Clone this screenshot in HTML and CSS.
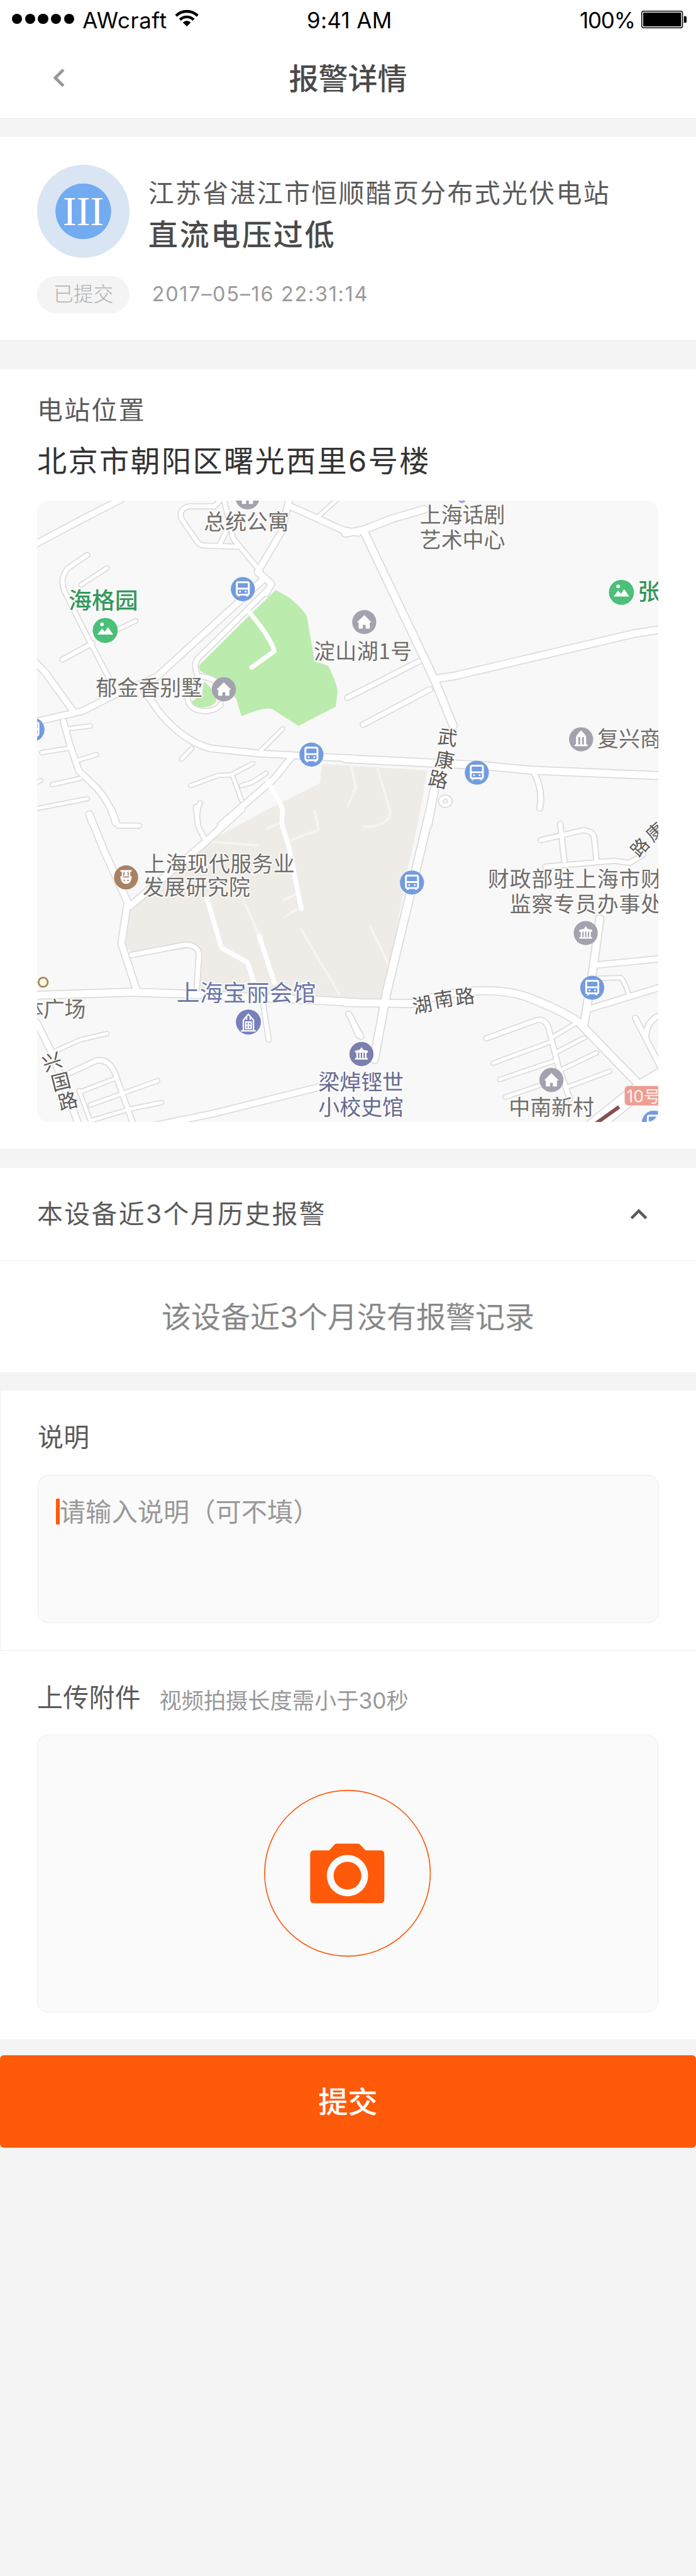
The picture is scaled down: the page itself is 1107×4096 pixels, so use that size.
FILE: index.html
```html
<!DOCTYPE html>
<html lang="zh-CN">
<head>
<meta charset="utf-8">
<title>报警详情</title>
<link rel="stylesheet" href="styles.css">
</head>
<body>
<header class="header">
  <div class="status">
    <div class="status-left">
      <span class="dots"><i></i><i></i><i></i><i></i><i></i></span>
      <span class="carrier">AWcraft</span>
      <svg class="wifi" viewBox="0 0 52 38">
        <g fill="none" stroke="#000" stroke-width="6"><path d="M2.7 13.7A33 33 0 0 1 49.3 13.7"/><path d="M11.2 22.2A21 21 0 0 1 40.8 22.2"/></g>
        <path d="M26 36.5L17.5 28A12 12 0 0 1 34.5 28Z"/>
      </svg>
    </div>
    <span class="time">9:41 AM</span>
    <div class="status-right">
      <span class="percent">100%</span>
      <svg class="battery" viewBox="0 0 98 38">
        <rect x="1" y="1" width="88" height="36" rx="4" fill="none" stroke="#000" stroke-width="2"/>
        <rect x="4" y="4" width="82" height="30" rx="1"/>
        <path d="M92 12h3q3 0 3 3v8q0 3-3 3h-3z"/>
      </svg>
    </div>
  </div>
  <nav class="nav">
    <svg class="back" viewBox="0 0 24 40"><path d="M21.5 2.500L4 20L21.500 37.500"/></svg>
    <h1>报警详情</h1>
  </nav>
</header>

<section class="panel alarm">
  <div class="alarm-main">
    <div class="level"><span>III</span></div>
    <div class="alarm-text">
      <p class="station">江苏省湛江市恒顺醋页分布式光伏电站</p>
      <p class="alarm-name">直流电压过低</p>
    </div>
  </div>
  <div class="alarm-meta">
    <span class="tag">已提交</span>
    <time class="date">2017–05–16 22:31:14</time>
  </div>
</section>

<section class="panel place">
  <h2 class="label">电站位置</h2>
  <p class="address">北京市朝阳区曙光西里6号楼</p>
  <svg class="map" viewBox="80 1080 1340 1340">
    <defs>
      <g id="roads">
        <g transform="translate(70 1070) scale(.4464)">
          <path class="w28" d="M0 240L230 118L430 15"/>
          <path class="w22" d="M915 10L880 50H760Q705 60 720 110L795 220Q805 240 840 240L1000 245M905 235L935 175M925 15L970 205L1090 350"/>
          <path class="w28" d="M1245 0L1205 170L1090 365L1155 425L1130 470"/>
          <path class="w28" d="M1235 45L1380 110L1500 165L1575 178"/>
          <path class="w18" d="M1370 110L1480 10"/>
          <path class="w28" d="M1090 370L1120 400L600 875L400 960L240 1040L10 1092"/>
          <path class="w24" d="M1140 450L800 785Q775 820 800 870Q900 880 900 930"/>
          <path class="w28" d="M540 940L610 1040Q720 1180 860 1220L1100 1245L1575 1270"/>
          <path class="w22" d="M265 285L170 350Q130 400 155 460L270 690L370 880M290 712L145 790"/>
          <path class="w18" d="M360 348L235 430M360 670L500 603"/>
          <path class="w28" d="M0 790L60 850L200 1045"/>
          <path class="w26" d="M150 1090L180 1200L225 1330L310 1410Q380 1490 400 1580"/>
          <path class="w18" d="M170 1125L280 1112M45 1240L170 1220M210 1280L310 1250M95 1395L230 1365M0 1515L265 1463M15 1385L40 1375M270 1540L280 1580"/>
          <path class="w22" d="M800 870Q750 930 750 980Q760 1040 840 1040Q905 1030 910 1005"/>
          <path class="w18" d="M1210 1125L1100 1235M770 1220L720 1272M765 1400L900 1350L960 1348L1065 1293M970 1360L1010 1470M1010 1400L1060 1385L1130 1340"/>
          <path class="w28" d="M1250 1265L1165 1370L910 1590"/>
          <path class="w22" d="M810 1485Q790 1520 800 1590"/>
        </g>
        <g transform="translate(750 1070) scale(.4796 .4464)">
          <path class="w32" d="M-10 180L70 165L200 110L345 65M75 175L390 885L475 1110M390 885L480 870L1290 665L1410 645"/>
          <path class="w24" d="M320 800L0 975M370 935L70 1105"/>
          <path class="w34" d="M-10 1270L600 1302L820 1325L1410 1352"/>
          <path class="w24" d="M840 1340Q880 1420 865 1510"/>
          <path class="w34" d="M390 1420L360 1590"/>
          <path class="w18" d="M420 1475a20 20 0 1 0 40 0a20 20 0 1 0 -40 0"/>
        </g>
        <g transform="translate(70 1750) scale(.4464)">
          <path class="w30" d="M275 15L350 200L460 440L430 640L505 870M470 460L830 155L1010 -10"/>
          <path class="w22" d="M790 -20L800 70L835 140M385 -10L415 70H515"/>
          <path class="w24" d="M480 695L740 645Q800 650 805 690L795 850"/>
          <path class="w34" d="M10 890L480 875L700 882L1400 915L1580 925"/>
          <path class="w28" d="M20 1020L90 1160L225 1520"/>
          <path class="w18" d="M110 1160L230 1105L360 1075"/>
          <path class="w24" d="M180 1265L310 1205Q370 1195 400 1270L490 1520"/>
          <path class="w18" d="M225 1350L285 1510M235 1355L400 1292M280 1420L605 1303M295 1492L470 1440L625 1408"/>
          <path class="w22" d="M1115 930L1142 1105M1535 990L1575 1085"/>
          <path class="w28" d="M540 1530L880 1460L1380 1335"/>
        </g>
        <g transform="translate(750 1750) scale(.4796 .4464)">
          <path class="w34" d="M375 -20L300 320L175 880L120 1200"/>
          <path class="w34" d="M-10 925L290 930Q420 880 560 870Q700 860 800 895Q960 960 1040 1020L1310 1320"/>
          <path class="w32" d="M1135 520L1105 760L1065 1025"/>
          <path class="w26" d="M1105 745L1410 713M1090 955L1410 850"/>
          <path class="w18" d="M1120 808L1230 805Q1245 820 1265 885"/>
          <path class="w22" d="M870 140L1060 92Q1105 95 1110 130L1120 240M957 60L975 240M890 268L1200 240L1270 250L1330 210"/>
          <path class="w22" d="M625 1098L850 1010Q890 1000 905 1050L950 1240L1000 1390"/>
          <path class="w18" d="M925 1090L1020 1030M655 1218L915 1115M685 1297L935 1205M710 1382L880 1320M940 1165L1065 1095M960 1250L1120 1168M985 1335L1180 1257"/>
          <path class="w24" d="M1295 1000L1405 1230M1410 985Q1345 1010 1342 1090M5 980L60 1090"/>
          <path class="w60" d="M1440 1260L1330 1330L1110 1520"/>
        </g>
      </g>
      <g id="bus">
        <circle r="26" fill="#739be0"/>
        <g fill="none" stroke="#fff" stroke-width="4"><rect x="-13" y="-15" width="26" height="27" rx="3"/><path d="M-13 -1H13M-9 12V16M9 12V16"/></g>
        <circle cx="-6" cy="5.500" r="2" fill="#fff"/><circle cx="6" cy="5.500" r="2" fill="#fff"/>
      </g>
      <g id="house"><circle r="26" fill="#a3a2ae"/><path fill="#fff" d="M0-15L16 1H12V14H3V6H-3V14H-12V1H-16Z"/></g>
      <g id="park"><circle r="27" fill="#4cbf79"/><path fill="#fff" d="M-17 9L-7-4L-1 3L6-7L17 9Z"/><circle cx="-7" cy="-13" r="4" fill="#fff"/></g>
      <g id="hall"><circle r="26"/><path fill="#fff" d="M-14-7L-4-9L0-15L4-9L14-7V-3H11V9H14V12H-14V9H-11V-3H-14Z"/><path d="M-6-3V9M0-3V9M6-3V9" stroke="currentColor" stroke-width="3"/></g>
    </defs>
    <rect x="80" y="1080" width="1340" height="1340" fill="#f8f8f8"/>
    <path fill="#efece8" d="M590 1740L690 1690L695 1648L922 1662L905 1760L875 1900L828 2156L430 2140L425 2045L290 2060L262 2032L285 1955L440 1820Z"/>
    <g class="faint">
      <path d="M448 1815L556 1824M650 2005L732 2145M679 1750L688 1790L628 1812M525 1942L560 2020M758 1650L768 1700L750 1740M815 1660L842 1750Q840 1785 785 1783M800 2000L840 2085M575 1788L610 1772M612 1942L640 1928M615 1978L640 1962"/>
    </g>
    <path fill="#bbebad" d="M595 1273L624 1289Q655 1316 662 1329L679 1427L708 1436Q731 1481 728 1499L724 1525L644 1566L588 1530Q575 1523 521 1545L510 1508L480 1470L432 1448L429 1436L548 1318Z"/>
    <path fill="#bbebad" d="M440 1470Q465 1490 467 1512Q454 1530 427 1525L411 1516L436 1498Z"/>
    <use href="#roads" class="casing"/>
    <use href="#roads" class="surface"/>
    <g class="plain-road">
      <path d="M539 1322Q583 1374 592 1405L543 1440"/>
      <path d="M578 1685L610 1745L608 1777L624 1830L650 1960M447 1940L478 2045L534 2076L548 2120M559 2018L592 2120"/>
    </g>
    <path d="M1336 2388L1280 2428" stroke="#87504c" stroke-width="8"/>
    <rect x="1348" y="2343" width="90" height="42" rx="8" fill="#ee9d91"/>
    <text x="1352" y="2378" font-size="36" fill="#fff3ee">10号</text>

    <use href="#house" x="534" y="1073"/>
    <circle cx="997" cy="1076" r="9" fill="#a79bf0"/>
    <use href="#park" x="227" y="1360"/>
    <use href="#park" x="1341" y="1278"/>
    <use href="#bus" x="524" y="1271"/>
    <use href="#bus" x="70" y="1574"/>
    <use href="#bus" x="672" y="1628"/>
    <use href="#bus" x="1029" y="1667"/>
    <use href="#bus" x="889" y="1904"/>
    <use href="#bus" x="1278" y="2131"/>
    <use href="#bus" x="1411" y="2422"/>
    <use href="#house" x="483" y="1487"/>
    <use href="#house" x="786" y="1342"/>
    <use href="#house" x="1190" y="2330"/>
    <g transform="translate(1254 1595)"><circle r="26" fill="#a3a2ae"/><path fill="#fff" d="M-14 15V11H-11V-5Q-9-11 0-19Q9-11 11-5V11H14V15Z"/><path d="M-4-5V11M4-5V11" stroke="#a3a2ae" stroke-width="4"/></g>
    <use href="#hall" x="1264" y="2013" class="hall-gray"/>
    <use href="#hall" x="780" y="2274" class="hall-blue"/>
    <g transform="translate(272 1893)"><circle r="26" fill="#a98163"/><path fill="#fff" d="M-12-16H12V-12H9V-3H12V1Q10 14 0 14Q-10 14-12 1V-3H-9V-12H-12Z"/><path d="M-4-12L-5-4M4-12L5-4M-7-1H7M-4 5V8M4 5V8" stroke="#a98163" stroke-width="2.500"/></g>
    <g transform="translate(536 2205)"><circle r="27" fill="#7680bd"/><path d="M-16 19H16M-11 19V-4L0-17L11-4V19M-6 0H6V14H-6ZM0 0V14M-6 7H6M-4-12V-5M4-12V-5" fill="none" stroke="#fff" stroke-width="3"/></g>
    <circle cx="93" cy="2119" r="10" fill="#fff8e6" stroke="#a98a5c" stroke-width="4"/>

    <g class="map-label">
      <text x="440" y="1142" textLength="184">总统公寓</text>
      <text x="906" y="1128" textLength="184">上海话剧</text>
      <text x="906" y="1182" textLength="184">艺术中心</text>
      <text class="green" x="148" y="1314" textLength="150">海格园</text>
      <text class="green" x="1376" y="1295">张</text>
      <text x="207" y="1500" textLength="230">郁金香别墅</text>
      <text x="677" y="1422" textLength="212">淀山湖1号</text>
      <text x="1289" y="1610">复兴商</text>
      <text x="311" y="1881" textLength="325">上海现代服务业</text>
      <text x="308" y="1931" textLength="232">发展研究院</text>
      <text x="1053" y="1913" textLength="376">财政部驻上海市财</text>
      <text x="1100" y="1967" textLength="329">监察专员办事处</text>
      <text class="blue big" x="381" y="2160" textLength="301">上海宝丽会馆</text>
      <text x="48" y="2194" textLength="137">体广场</text>
      <text class="blue" x="687" y="2351" textLength="184">梁焯铿世</text>
      <text class="blue" x="687" y="2406" textLength="184">小校史馆</text>
      <text x="1098" y="2406" textLength="184">中南新村</text>
    </g>
    <g class="map-label street">
      <text transform="translate(966 1590) rotate(8)" y="16">武</text>
      <text transform="translate(960 1639) rotate(10)" y="16">康</text>
      <text transform="translate(946 1681) rotate(12)" y="16">路</text>
      <text transform="translate(911 2167) rotate(-11)" y="16">湖</text>
      <text transform="translate(957 2155) rotate(-9)" y="16">南</text>
      <text transform="translate(1003 2149) rotate(-7)" y="16">路</text>
      <text transform="translate(112 2290) rotate(-18)" y="16">兴</text>
      <text transform="translate(131 2333) rotate(-14)" y="16">国</text>
      <text transform="translate(146 2375) rotate(-14)" y="16">路</text>
      <text transform="translate(1380 1827) rotate(-48)" y="15" class="small">路</text>
      <text transform="translate(1413 1794) rotate(-42)" y="15" class="small">康</text>
    </g>
  </svg>
</section>

<section class="panel history">
  <div class="history-head">
    <h2 class="label">本设备近3个月历史报警</h2>
    <svg class="collapse" viewBox="0 0 38 24"><path d="M3 20.500L19 4.500L35 20.500"/></svg>
  </div>
  <p class="empty">该设备近3个月没有报警记录</p>
</section>

<section class="panel note">
  <h2 class="label tight">说明</h2>
  <div class="note-box"><span class="caret"></span><span class="placeholder">请输入说明（可不填）</span></div>
</section>

<section class="panel upload">
  <div class="upload-head">
    <h2 class="label tight">上传附件</h2>
    <span class="hint">视频拍摄长度需小于30秒</span>
  </div>
  <div class="upload-box">
    <svg class="shoot" viewBox="0 0 360 360">
      <circle cx="180" cy="180" r="178.800" fill="none" stroke="#ff5a09" stroke-width="2.200"/>
      <g transform="translate(99.500 115.500)" fill="#ff5a09">
        <path fill-rule="evenodd" d="M8 15H41L53 2Q55 .500 58 .500H102Q105 .500 107 2L120 15H152Q160 15 160 23V121Q160 129 152 129H8Q0 129 0 121V23Q0 15 8 15ZM80.500 25A44.500 44.500 0 1 0 80.500 114A44.500 44.500 0 1 0 80.500 25Z"/>
        <circle cx="80.500" cy="69.500" r="30"/>
      </g>
    </svg>
  </div>
</section>

<button class="submit">提交</button>
</body>
</html>
```
FILE: styles.css
```css
/* 1rem = 100 design pixels on a 1502px wide artboard */
html { font-size: 73.7017px; }
* { box-sizing: border-box; margin: 0; padding: 0; }
body {
  background: #f4f4f4;
  min-height: 4096px;
  font-family: Inter, "Noto Sans CJK SC", sans-serif;
  font-weight: 400;
  overflow-x: hidden;
}
svg { display: block; }

.header { height: 2.56rem; background: #fff; border-bottom: .02rem solid #ededed; margin-bottom: .4rem; }
.status {
  display: grid; grid-template-columns: 1fr auto 1fr; align-items: center;
  height: .86rem; padding: 0 .2rem 0 .26rem;
  color: #000; font-size: .473rem; line-height: .6rem;
}
.status-left, .status-right { display: flex; align-items: center; }
.status-right { justify-content: flex-end; }
.dots { display: flex; gap: .06rem; margin-right: .18rem; margin-top: -.04rem; }
.dots i { width: .22rem; height: .22rem; border-radius: 50%; background: #000; }
.carrier { letter-spacing: .008rem; }
.wifi { width: .52rem; height: .38rem; margin: -.06rem 0 0 .17rem; }
.time { letter-spacing: .005rem; }
.percent { letter-spacing: -.016rem; }
.battery { width: .98rem; height: .38rem; margin-left: .14rem; margin-top: -.03rem; }
.nav { position: relative; display: flex; align-items: center; height: 1.68rem; padding-left: 1.16rem; }
.back { width: .24rem; height: .4rem; margin-top: -.04rem; }
.back path, .collapse path { fill: none; stroke: #979797; stroke-width: 6.500; }
.nav h1 {
  position: absolute; left: 0; right: 0; text-align: center;
  font-size: .638rem; font-weight: 500; line-height: 1rem; color: #4a4a4a;
}

.panel { background: #fff; padding: 0 .8rem; border-bottom: .02rem solid #ededed; }
.label { font-size: .555rem; line-height: .8rem; font-weight: 400; letter-spacing: .032rem; color: #5a5a5a; }
.label.tight { letter-spacing: .005rem; }

.alarm { height: 4.4rem; padding-top: .6rem; margin-bottom: .6rem; }
.alarm-main { display: flex; gap: .4rem; }
.level {
  display: flex; align-items: center; justify-content: center;
  width: 2rem; height: 2rem; border-radius: 50%;
  background: radial-gradient(circle, #73abf1 .595rem, #d9e5f3 .605rem);
}
.level span { font: .89rem/1.2rem "Liberation Serif", serif; color: #fff; }
.alarm-text { padding-top: .21rem; white-space: nowrap; }
.station { font-size: .555rem; line-height: .8rem; letter-spacing: .032rem; color: #5a5a5a; }
.alarm-name { font-size: .64rem; line-height: .98rem; letter-spacing: .035rem; font-weight: 500; color: #4a4a4a; }
.alarm-meta { display: flex; align-items: center; margin-top: .4rem; }
.tag {
  width: 2rem; height: .8rem; border-radius: .4rem; background: #f4f4f4;
  font-size: .432rem; line-height: .8rem; text-align: center; color: #b0b0b0; font-weight: 300;
}
.date { margin-left: .48rem; font-size: .44rem; line-height: .8rem; letter-spacing: .023rem; color: #9b9b9b; }

.place { height: 16.84rem; padding-top: .49rem; margin-bottom: .4rem; }
.address { margin-top: .19rem; font-size: .64rem; line-height: 1rem; letter-spacing: .032rem; color: #333; }
.map { width: 13.4rem; height: 13.4rem; margin-top: .36rem; border-radius: .24rem; overflow: hidden; }
.w18 { --w: 16px; } .w22 { --w: 20px; } .w24 { --w: 22px; } .w26 { --w: 26px; } .w28 { --w: 28px; }
.w30 { --w: 30px; } .w32 { --w: 32px; } .w34 { --w: 34px; } .w60 { --w: 70px; }
#roads path { stroke-width: calc(var(--w) + var(--edge)); }
.casing, .surface, .faint, .plain-road { fill: none; stroke-linejoin: round; stroke-linecap: round; }
.casing { --edge: 10px; stroke: #dcdadb; }
.surface { --edge: 0px; stroke: #fff; }
.faint { stroke: #f8f4f0; stroke-width: 5; }
.plain-road { stroke: #fff; stroke-width: 10; }
.hall-gray { fill: #a3a2ae; color: #a3a2ae; }
.hall-blue { fill: #7a7fae; color: #7a7fae; }
.map-label text {
  font-family: "Noto Sans CJK SC", sans-serif; font-size: 46px; fill: #716d69;
  stroke: #fbfbfb; stroke-width: 5px; stroke-linejoin: round; paint-order: stroke;
}
.map-label .green { fill: #35985c; font-size: 50px; font-weight: 500; }
.map-label .blue { fill: #666a90; }
.map-label .big { font-size: 50px; fill: #6c76a6; }
.map-label.street text { font-size: 42px; text-anchor: middle; fill: #5c5956; }
.map-label.street .small { font-size: 38px; }

.history { height: 4.4rem; padding: 0; margin-bottom: .4rem; border: 0; }
.history-head {
  display: flex; align-items: center; justify-content: space-between;
  height: 2rem; padding: 0 1.05rem 0 .8rem; border-bottom: .02rem solid #ededed;
}
.collapse { width: .38rem; height: .24rem; }
.collapse path { stroke: #5a5a5a; stroke-width: 6; }
.empty { font-size: .638rem; line-height: 2.42rem; text-align: center; color: #888; }

.note { height: 5.62rem; padding: .61rem .8rem 0; border-left: .02rem solid #f1f1f1; }
.note-box, .upload-box { width: 13.4rem; background: #fafafa; border: .02rem solid #ededed; border-radius: .24rem; }
.note-box { display: flex; align-items: flex-start; height: 3.2rem; margin-top: .41rem; padding: .5rem .38rem; }
.caret { width: .08rem; height: .56rem; background: #ff5a09; }
.placeholder { font-size: .56rem; line-height: .58rem; color: #999; }

.upload { height: 8.4rem; padding-top: .61rem; margin-bottom: .32rem; }
.upload-head { display: flex; height: .8rem; }
.hint { margin-left: .4rem; padding-top: .07rem; font-size: .478rem; line-height: .8rem; color: #999; }
.upload-box { display: flex; align-items: center; justify-content: center; height: 6rem; margin-top: .39rem; }
.shoot { width: 3.6rem; height: 3.6rem; }

.submit {
  display: block; width: 100%; height: 2rem; border: 0; border-radius: .08rem; background: #ff5a09;
  font: 500 .64rem/2rem Inter, "Noto Sans CJK SC", sans-serif; color: #fff; text-align: center;
}
```
